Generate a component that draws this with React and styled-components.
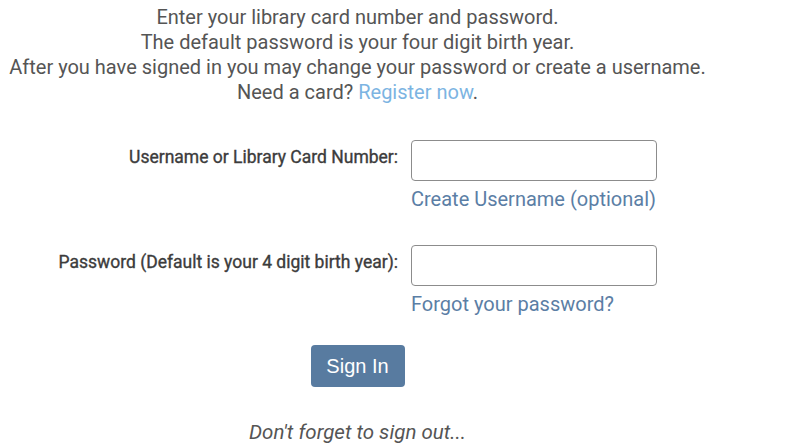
import React from "react";
import styled, { createGlobalStyle } from "styled-components";

const GlobalStyle = createGlobalStyle`
  body {
    margin: 0;
    background: #fff;
    font-family: Roboto, "Liberation Sans", sans-serif;
  }
`;

const Page = styled.div`
  width: 715px;
  padding-top: 5px;
  text-align: center;
  color: #555;
`;

const Intro = styled.p`
  margin: 0;
  font-size: 20px;
  line-height: 25px;
`;

const RegisterLink = styled.a`
  color: #7cb4e2;
  text-decoration: none;
`;

const Form = styled.form`
  display: grid;
  grid-template-columns: 398px 246px;
  column-gap: 13px;
  margin-top: 35px;
  text-align: left;
`;

const Label = styled.label`
  grid-column: 1;
  align-self: center;
  padding-bottom: 7px;
  text-align: right;
  font-size: 17.5px;
  font-weight: 400;
  color: #3c3c3c;
  -webkit-text-stroke: 0.35px #3c3c3c;
  margin-top: ${(p) => p.$top || 0}px;
`;

const Input = styled.input`
  grid-column: 2;
  box-sizing: border-box;
  width: 246px;
  height: 41px;
  margin-top: ${(p) => p.$top || 0}px;
  border: 1px solid #8c8c8c;
  border-radius: 4px;
  padding: 6px 10px;
  font-size: 16px;
`;

const HelpLink = styled.a`
  grid-column: 2;
  margin-top: 6px;
  font-size: 20px;
  line-height: 24px;
  color: #5b7ea5;
  text-decoration: none;
  white-space: nowrap;
`;

const Actions = styled.div`
  display: flex;
  justify-content: center;
  margin-top: 29px;
`;

const SignInButton = styled.button`
  width: 94px;
  height: 42px;
  border: none;
  border-radius: 4px;
  background: #587ba0;
  color: #fff;
  font-family: "Liberation Sans", Arial, sans-serif;
  font-size: 20px;
  cursor: pointer;
`;

const Reminder = styled.p`
  margin: 33px 0 0;
  font-size: 20.5px;
  line-height: 24px;
  font-style: italic;
  color: #555;
`;

export default function App() {
  return (
    <>
      <GlobalStyle />
      <Page>
        <Intro>
          Enter your library card number and password.
          <br />
          The default password is your four digit birth year.
          <br />
          After you have signed in you may change your password or create a
          username.
          <br />
          Need a card? <RegisterLink href="#">Register now</RegisterLink>.
        </Intro>
        <Form onSubmit={(e) => e.preventDefault()}>
          <Label htmlFor="user">Username or Library Card Number:</Label>
          <Input id="user" type="text" />
          <HelpLink href="#">Create Username (optional)</HelpLink>
          <Label htmlFor="pin" $top={34}>
            Password (Default is your 4 digit birth year):
          </Label>
          <Input id="pin" type="password" $top={34} />
          <HelpLink href="#">Forgot your password?</HelpLink>
        </Form>
        <Actions>
          <SignInButton type="button">Sign In</SignInButton>
        </Actions>
        <Reminder>Don't forget to sign out...</Reminder>
      </Page>
    </>
  );
}
